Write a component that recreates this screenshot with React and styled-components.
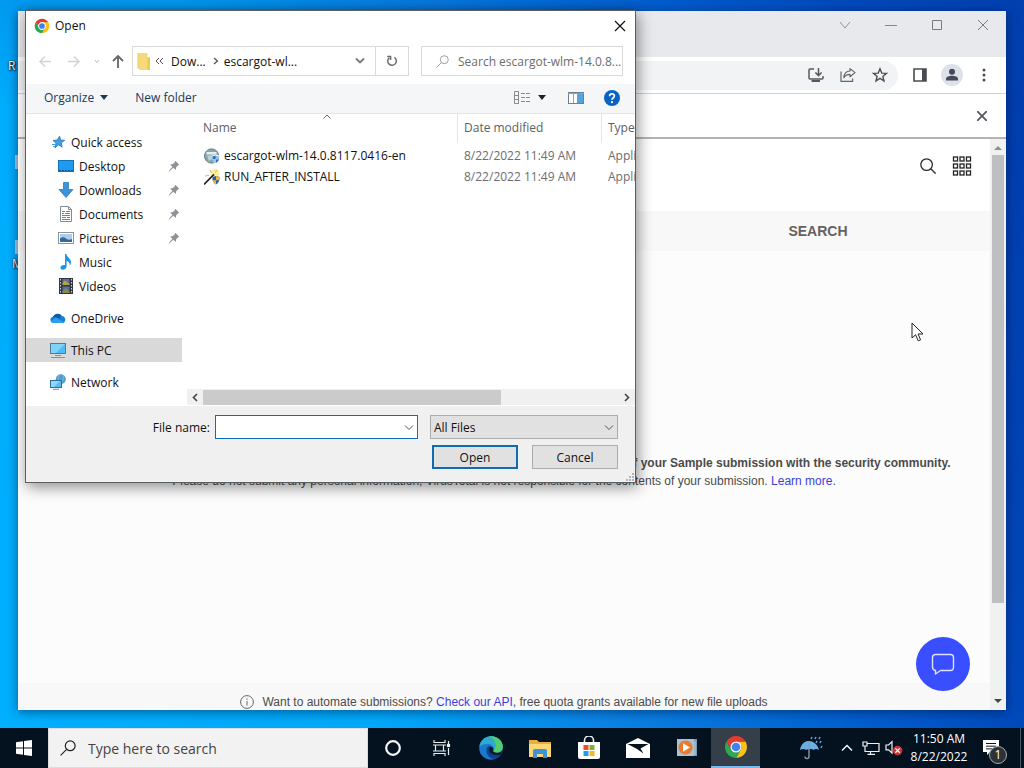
import React from 'react';
import styled, { createGlobalStyle, css } from 'styled-components';

const GlobalStyle = createGlobalStyle`
  * { box-sizing: border-box; }
  html, body { margin: 0; padding: 0; overflow: hidden; }
  body, button, input, select { font-family: 'Open Sans', 'Noto Sans', sans-serif; font-size: 12px; }
  button { background: none; border: 0; padding: 0; margin: 0; color: inherit; }
  svg { display: block; flex: none; }
`;

/* ---------- icons ---------- */

const ChromeIcon = ({ size }) => (
  <svg width={size} height={size} viewBox="0 0 48 48">
    <path fill="#fbc116" d="M24 13H43.05A22 22 0 0 1 24 46L33.53 29.5A11 11 0 0 0 24 13Z" />
    <path fill="#2da94f" d="M33.53 29.5L24 46A22 22 0 0 1 4.95 13L14.47 29.5A11 11 0 0 0 33.53 29.5Z" />
    <path fill="#e33b2e" d="M14.47 29.5L4.95 13A22 22 0 0 1 43.05 13H24A11 11 0 0 0 14.47 29.5Z" />
    <circle cx="24" cy="24" r="11" fill="#fff" />
    <circle cx="24" cy="24" r="8.6" fill="#3f82ee" />
  </svg>
);

const Line = ({ w = 16, h = 16, d, stroke = '#555', sw = 1, fill = 'none' }) => (
  <svg width={w} height={h} viewBox={`0 0 ${w} ${h}`} fill={fill} stroke={stroke} strokeWidth={sw}>
    <path d={d} />
  </svg>
);

const Magnifier = ({ size = 14, stroke = '#8a8a8a', sw = 1 }) => (
  <svg width={size} height={size} viewBox="0 0 16 16" fill="none" stroke={stroke} strokeWidth={sw}>
    <circle cx="10.2" cy="5.8" r="4.9" />
    <path d="M6.6 9.4L0.6 15.4" />
  </svg>
);

const StarIcon = () => (
  <svg width="16" height="16" viewBox="0 0 16 16">
    <path d="M9.6 2.2L10.6 6L14.6 6.4L11.2 8.8L12.2 13.2L8.6 10.8L5 13.8L6 9.2L3 6.4L7.2 6Z" fill="#3f9ee4" stroke="#1f74ba" strokeWidth=".8" />
    <path d="M2 10.5H5M3 12.5H5" stroke="#3f9ee4" />
  </svg>
);

const DesktopIcon = () => (
  <svg width="16" height="16" viewBox="0 0 16 16">
    <rect x=".5" y="2.5" width="15" height="11" fill="#1c9bf0" stroke="#1471b8" />
    <path d="M1 12.5H15" stroke="#0d5a98" strokeDasharray="2 1" />
  </svg>
);

const DownloadsIcon = () => (
  <svg width="16" height="16" viewBox="0 0 16 16">
    <path d="M5.5 .5H10.5V7.5H15L8 15.5L1 7.5H5.5Z" fill="#3b94da" stroke="#2a7ec0" strokeWidth=".8" />
  </svg>
);

const DocumentsIcon = () => (
  <svg width="16" height="16" viewBox="0 0 16 16">
    <path d="M2.5 .5H10.5L13.5 3.5V15.5H2.5Z" fill="#fff" stroke="#7d8b96" />
    <path d="M10.5 .5V3.5H13.5" fill="none" stroke="#7d8b96" />
    <path d="M4 5.5H7M8 5.5H12M4 7.5H6M7 7.5H12M4 9.5H12M4 11.5H8M9 11.5H12M4 13.5H12" stroke="#2f9bb8" />
  </svg>
);

const PicturesIcon = () => (
  <svg width="16" height="16" viewBox="0 0 16 16">
    <rect x=".5" y="2.5" width="15" height="11" fill="#fff" stroke="#8c959c" />
    <rect x="2" y="4" width="12" height="8" fill="#a8cdf0" />
    <path d="M2 8.5C5 6.5 6 7 8 8.5S12 10 14 9V12H2Z" fill="#3a6590" />
    <path d="M2 10.5L14 11V12H2Z" fill="#2b6fb8" />
  </svg>
);

const MusicIcon = () => (
  <svg width="16" height="16" viewBox="0 0 16 16">
    <path d="M7 0H8.4C8.6 3 13 4.4 13 8C13 9.4 12.4 10.8 11.6 11.6C12 9 10.6 7.4 8.6 6.8V12.6C8.6 14.4 6.8 15.8 4.8 15.8S2.2 14.4 2.6 13C3 11.4 5 10.6 7 11Z" fill="#1e96e8" />
  </svg>
);

const VideosIcon = () => (
  <svg width="16" height="16" viewBox="0 0 16 16">
    <rect x="1" y="0" width="14" height="16" fill="#33373d" />
    <path d="M2.5 1V16M13.5 1V16" stroke="#cfd3d8" strokeDasharray="1.5 1.5" />
    <rect x="4.5" y="1" width="7" height="6" fill="#5d6db0" />
    <path d="M4.5 5L7 2.5L11.5 6V7H4.5Z" fill="#b9a433" />
    <rect x="4.5" y="8.5" width="7" height="6.5" fill="#4b6ea8" />
    <path d="M4.5 13L8 10L11.5 14V15H4.5Z" fill="#8f8840" />
  </svg>
);

const OneDriveIcon = () => (
  <svg width="16" height="16" viewBox="0 0 16 16">
    <path d="M3 6.5A5 4.5 0 0 1 12 6L9 11L1 9.5A3.4 3.4 0 0 1 3 6.5Z" fill="#0a5aa8" />
    <path d="M12 6A3.6 3.6 0 0 1 12.8 13H3.6A3.5 3.5 0 0 1 .4 9C1.6 6.6 4.4 6.2 6.4 7.6L9.4 9C9.6 7.2 10.6 6.2 12 6Z" fill="#1581d6" />
    <path d="M6 7.6L14.6 12.4A3 3 0 0 1 12.8 13H3.6A3.4 3.4 0 0 1 1 11.4Z" fill="#2aa0ec" />
  </svg>
);

const PcIcon = () => (
  <svg width="16" height="16" viewBox="0 0 16 16">
    <rect x=".5" y="1.5" width="15" height="10" fill="#4cbcf2" stroke="#4f7c99" />
    <path d="M1 2H15L6 11H1Z" fill="#7fd3f8" />
    <path d="M5 13.5H11M1 15.5H15" stroke="#7897aa" />
  </svg>
);

const NetworkIcon = () => (
  <svg width="16" height="16" viewBox="0 0 16 16">
    <circle cx="10.8" cy="5.2" r="5" fill="#4f9dcf" />
    <path d="M10 .4C7.6 3 8 6 9 8M13 1C14 4 13 7 11 9.6" fill="none" stroke="#8fc4e2" strokeWidth=".8" />
    <rect x=".5" y="6.5" width="11" height="7" fill="#55bdf0" stroke="#2e6f9c" />
    <path d="M1 7H10L4 13H1Z" fill="#8fd7f8" />
    <path d="M3 15.3H9" stroke="#6f93aa" />
  </svg>
);

const PinIcon = () => (
  <svg width="12" height="12" viewBox="0 0 12 12">
    <path d="M7.2 .8L11.4 4.8L10 5.2L8.2 7.2L7.8 10L5.4 7.8L1 11.4L.8 11L4.4 6.8L2.2 4.4L5 4L6.8 2.2Z" fill="#8c9299" />
  </svg>
);

const SetupIcon = () => (
  <svg width="16" height="16" viewBox="0 0 16 16">
    <circle cx="7.6" cy="8" r="7.2" fill="#87a5a8" stroke="#5d7c80" strokeWidth=".8" />
    <path d="M2.5 4H12.5V6.5H2.5Z" fill="#e4eef0" />
    <path d="M3 7.5H8V11L5 13Z" fill="#b9d3da" />
    <path d="M8 7.6L11.8 6.6L15.6 7.6C15.8 11.6 14.4 14 11.8 15.6C9.2 14 7.8 11.6 8 7.6Z" fill="#fff" />
    <path d="M11.8 7.4V11.2H8.6C8.4 10 8.4 9 8.6 8.2ZM11.8 11.2H15C14.4 13 13.4 14.2 11.8 15Z" fill="#2b6fb8" />
    <path d="M11.8 7.4L15 8.2V11.2H11.8ZM11.8 11.2V15C10.2 14.2 9 13 8.6 11.2Z" fill="#8fc1e6" />
  </svg>
);

const WandIcon = () => (
  <svg width="16" height="16" viewBox="0 0 16 16">
    <circle cx="11" cy="4.4" r="4.4" fill="#fbf0a0" />
    <path d="M0 15.4L10 5.4" stroke="#222" strokeWidth="1.6" />
    <path d="M1 7L5 6.4M6 1L7.4 4M13 1L11.4 3.6" stroke="#e5b93a" />
    <path d="M8.4 8L12 7L15.6 8C15.8 11.6 14.6 14 12 15.6C9.4 14 8.2 11.6 8.4 8Z" fill="#2464ae" />
    <path d="M12 7L15.6 8V11.2H12ZM12 11.2V15.6C10.2 14.4 9 13 8.6 11.2Z" fill="#f0b53a" />
  </svg>
);

const FolderIcon = () => (
  <svg width="14" height="17" viewBox="0 0 14 17">
    <path d="M1 0H10.5V4.5H13V17H3L1 15.5Z" fill="#f6d978" />
    <path d="M10.5 4.5H13V17H10.5Z" fill="#ecc656" />
    <path d="M1 0V15.5" stroke="#ecc95f" />
  </svg>
);

const ViewIcon = () => (
  <svg width="17" height="13" viewBox="0 0 17 13" fill="none" stroke="#8a8a8a">
    <path d="M.5 .5H4.5V12.5H.5ZM.5 4.5H4.5M.5 8.5H4.5" />
    <path d="M7 2.5H11M12 2.5H16M7 6.5H11M12 6.5H16M7 10.5H11M12 10.5H16" />
  </svg>
);

const PaneIcon = () => (
  <svg width="16" height="12" viewBox="0 0 16 12">
    <rect x=".5" y=".5" width="15" height="11" fill="#fff" stroke="#6d7f8e" />
    <rect x="9" y="1" width="6" height="10" fill="#55a5dd" />
    <path d="M0 1.5H16M5.5 2V11" stroke="#8ea2b0" />
  </svg>
);

const HelpIcon = () => (
  <svg width="16" height="16" viewBox="0 0 16 16">
    <circle cx="8" cy="8" r="8" fill="#0a63c2" />
    <path d="M5.6 6.2C5.6 3.2 10.4 3.2 10.4 6C10.4 7.8 8 7.8 8 9.8" fill="none" stroke="#fff" strokeWidth="1.7" />
    <circle cx="8" cy="12.2" r="1.1" fill="#fff" />
  </svg>
);

const RefreshIcon = () => (
  <svg width="12" height="12" viewBox="0 0 12 12" fill="none" stroke="#6b6b6b" strokeWidth="1.5">
    <path d="M8.4 2.4A4.3 4.3 0 1 1 3.2 2.8" />
    <path d="M1.2 1.6H4.6V5" />
  </svg>
);

const InstallIcon = () => (
  <svg width="16" height="16" viewBox="0 0 16 16" fill="none" stroke="#55595e" strokeWidth="1.5">
    <path d="M6 2H2Q1 2 1 3V11Q1 12 2 12H14Q15 12 15 11V9" />
    <path d="M10.5 1V8.4M7.4 5.4L10.5 8.6L13.6 5.4" />
    <path d="M3.5 14H12" strokeWidth="2" />
  </svg>
);

const ShareIcon = () => (
  <svg width="16" height="16" viewBox="0 0 16 16" fill="none" stroke="#62666b" strokeWidth="1.2">
    <path d="M1 4.4V14.4H12.6V11.6" />
    <path d="M10 1.6L15 5.6L10 9.8V7.4C7 7.4 5 8.4 3.8 10.8C4 7 6.4 4.2 10 4Z" strokeLinejoin="round" />
  </svg>
);

const FavStarIcon = () => (
  <svg width="16" height="16" viewBox="0 0 16 16" fill="none" stroke="#4c5055" strokeWidth="1.4">
    <path d="M8 1.8L9.8 6.1L14.4 6.4L10.9 9.4L12 13.9L8 11.4L4 13.9L5.1 9.4L1.6 6.4L6.2 6.1Z" />
  </svg>
);

const SidePanelIcon = () => (
  <svg width="16" height="16" viewBox="0 0 16 16">
    <path d="M2 2H14V14H2Z" fill="none" stroke="#484c51" strokeWidth="1.6" />
    <path d="M10 2H14V14H10Z" fill="#484c51" />
  </svg>
);

const ProfileIcon = () => (
  <svg width="22" height="22" viewBox="0 0 22 22">
    <circle cx="11" cy="11" r="11" fill="#dde1ea" />
    <circle cx="11" cy="7.8" r="3" fill="#474d58" />
    <path d="M5 16.4V15C5 12.6 8 11.8 11 11.8S17 12.6 17 15V16.4Z" fill="#474d58" />
  </svg>
);

const DotsIcon = () => (
  <svg width="16" height="16" viewBox="0 0 16 16" fill="#484c51">
    <circle cx="8" cy="3" r="1.5" />
    <circle cx="8" cy="8" r="1.5" />
    <circle cx="8" cy="13" r="1.5" />
  </svg>
);

const PageSearchIcon = () => (
  <svg width="16" height="16" viewBox="0 0 16 16" fill="none" stroke="#2b2b2b" strokeWidth="1.3">
    <circle cx="6.6" cy="6.6" r="5.8" />
    <path d="M10.8 10.8L15.6 15.6" />
  </svg>
);

const AppsIcon = () => (
  <svg width="20" height="20" viewBox="0 0 20 20" fill="none" stroke="#222" strokeWidth="1.3">
    {[1.5, 8.5, 15.5].map((y) =>
      [1.5, 8, 14.5].map((x) => <rect key={`${x}-${y}`} x={x} y={y - 0.5} width="4" height="4" />)
    )}
  </svg>
);

const InfoIcon = () => (
  <svg width="14" height="14" viewBox="0 0 14 14" fill="none" stroke="#666">
    <circle cx="7" cy="7" r="6.4" />
    <path d="M7 3.4V4.8M7 6V10.6" />
  </svg>
);

const ChatIcon = () => (
  <svg width="24" height="24" viewBox="0 0 24 24" fill="none" stroke="#dfe2ff" strokeWidth="1.4">
    <path d="M4.5 2.5H19.5Q22.5 2.5 22.5 5.5V15Q22.5 18.5 19.5 18.5H9.5L4.5 22V18.5Q1.5 18 1.5 15V5.5Q1.5 2.5 4.5 2.5Z" strokeLinejoin="round" />
  </svg>
);

const WindowsIcon = () => (
  <svg width="16" height="16" viewBox="0 0 16 16" fill="#fff">
    <path d="M0 2.2L7 1.2V7.5H0ZM8 1.1L16 0V7.5H8ZM0 8.5H7V14.8L0 13.8ZM8 8.5H16V16L8 14.9Z" />
  </svg>
);

const CortanaIcon = () => (
  <svg width="16" height="16" viewBox="0 0 16 16" fill="none" stroke="#f4f6f8" strokeWidth="2.2">
    <circle cx="8" cy="8" r="6.8" />
  </svg>
);

const TaskViewIcon = () => (
  <svg width="18" height="16" viewBox="0 0 18 16" fill="none" stroke="#e8ecef" strokeWidth="1.2">
    <path d="M1 0V2.5H12V0M1 16V13.5H12V16M2.5 5H10.5V11H2.5ZM0 5H13M0 11H13M15.5 1V4M15.5 8V15" />
    <rect x="14.5" y="4.5" width="2" height="2" fill="#fff" />
  </svg>
);

const EdgeIcon = () => (
  <svg width="24" height="24" viewBox="0 0 24 24">
    <circle cx="12" cy="12" r="11.8" fill="#1b78cf" />
    <path d="M.4 10.6C1.4 4 6.4 .2 12 .2C19 .2 23.8 5.6 23.8 10.6C23.8 14.4 21 16.8 17.8 16.8C15.4 16.8 13.8 15.8 14.2 14.6C15.6 12 14 8.6 9.8 8C6 7.6 2 9 .4 10.6Z" fill="#2fa9d0" />
    <path d="M10 .4C19 -.6 23.8 5.6 23.8 10.6C23.8 14.4 21 16.8 17.8 16.8C15.4 16.8 13.8 15.8 14.2 14.6C19 11 17 3 10 .4Z" fill="#52cf6c" />
    <path d="M9.2 10C6 13 7 20 13 22.6C16.4 23.4 20.4 21.6 22 18.4C18 20.4 12 19.4 10.4 15.6C9.6 13.6 10 11.6 11.4 10.4Z" fill="#123f8c" />
    <path d="M11.4 10.4C13.8 10.6 15 12.8 14.2 14.6C13.8 15.8 15.4 16.8 17.8 16.8C20 16.8 22 15.8 23 14.4L22 18.4C18 20.4 12 19.4 10.4 15.6C9.6 13.6 10 11.6 11.4 10.4Z" fill="#0a1b2e" />
  </svg>
);

const ExplorerIcon = () => (
  <svg width="22" height="19" viewBox="0 0 22 19">
    <path d="M0 1H8L10 3H22V18H0Z" fill="#e9ae3d" />
    <path d="M0 5H22V18H0Z" fill="#fbd775" />
    <path d="M4 19V12Q4 10 6 10H16Q18 10 18 12V19H14V15H8V19Z" fill="#3e93d6" />
  </svg>
);

const StoreIcon = () => (
  <svg width="24" height="24" viewBox="0 0 24 24">
    <path d="M7.5 7V4.5A4.5 4.5 0 0 1 16.5 4.5V7" fill="none" stroke="#e9edef" strokeWidth="1.6" />
    <path d="M1 6H23V21Q23 23 21 23H3Q1 23 1 21Z" fill="#fff" />
    <rect x="6.5" y="9" width="5" height="5" fill="#e8502f" />
    <rect x="12.5" y="9" width="5" height="5" fill="#7db32e" />
    <rect x="6.5" y="15" width="5" height="5" fill="#1e9fe3" />
    <rect x="12.5" y="15" width="5" height="5" fill="#f5b62a" />
  </svg>
);

const MailIcon = () => (
  <svg width="24" height="20" viewBox="0 0 24 20">
    <path d="M12 0L24 6V20H0V6Z" fill="#fff" />
    <path d="M1.5 6H22.5L14.5 10.5L17.5 15.5L11 11Z" fill="#06131f" />
  </svg>
);

const MediaIcon = () => (
  <svg width="20" height="20" viewBox="0 0 20 20">
    <rect x="4" y="1" width="16" height="17" fill="#7699b4" />
    <rect x="0" y="1" width="17" height="17" fill="#a9c3d5" />
    <path d="M18 3V17" stroke="#b9d2e2" />
    <circle cx="8.5" cy="9.5" r="7" fill="#ec7a2c" />
    <path d="M6 5.2L13 9.5L6 13.8Z" fill="#fff" />
  </svg>
);

const UmbrellaIcon = () => (
  <svg width="24" height="24" viewBox="0 0 24 24">
    <path d="M1 14C2 7 7 4.8 10 5C15 5.4 19 9 20 14C18 12.6 16 12.6 14.6 14C13 12.6 9 12.6 7.4 14C5.4 12.6 3 12.6 1 14Z" fill="#68aee6" />
    <path d="M10 6V20.6Q10 22.6 8 22.6T6 20.6" fill="none" stroke="#8d99a4" strokeWidth="1.4" />
    <path d="M13 1L12 3M17 1L16 3M21 1L20 3M18 5L17 7M22 5L21 7M23 10L22 12" stroke="#5aa7e6" strokeWidth="1.5" />
  </svg>
);

const NetTrayIcon = () => (
  <svg width="18" height="14" viewBox="0 0 18 14" fill="none" stroke="#eef1f3" strokeWidth="1.2">
    <path d="M5 2.5H17V10.5H3V7M8.5 10.5V13M5.5 13.3H13M1 1H5V5H1ZM3 5V8" />
  </svg>
);

const SoundIcon = () => (
  <svg width="18" height="16" viewBox="0 0 18 16">
    <path d="M1 5H3.6L7 1.6V13L3.6 9.8H1Z" fill="none" stroke="#eef1f3" strokeWidth="1.2" />
    <circle cx="12.6" cy="10.6" r="4.8" fill="#c9302f" />
    <path d="M10.4 8.4L14.8 12.8M14.8 8.4L10.4 12.8" stroke="#fff" strokeWidth="1.3" />
  </svg>
);

const ActionCenterIcon = () => (
  <svg width="16" height="16" viewBox="0 0 16 16">
    <path d="M0 0H16V12H7L4 15V12H0Z" fill="#fff" />
    <path d="M3 3.5H13M3 6.2H13M3 8.9H10" stroke="#0a1520" />
  </svg>
);

/* ---------- desktop ---------- */

const Desktop = styled.div`
  position: relative;
  height: 100vh;
  overflow: hidden;
  display: flex;
  flex-direction: column;
  background:
    linear-gradient(to bottom, rgba(0, 80, 190, 0.2), transparent 14%),
    linear-gradient(75deg, #00b0ff 0%, #00a8fa 32%, #0a84e6 50%, #0060d0 70%, #0046b8 86%, #003cac 100%);
`;

const Wallpaper = styled.div`
  flex: 1;
  padding: 56px 0 0 8px;
  color: #fff;
  line-height: 20px;
  text-shadow: 1px 1px 2px #000, 0 0 2px #000;
`;

const Shortcut = styled.div`
  height: 99px;
  padding-left: ${(p) => p.$indent || 0}px;
`;

const ShortcutTile = styled.div`
  width: 16px;
  height: 14px;
  margin-top: ${(p) => p.$top || 0}px;
  background: #b5d3ec;
`;

const Window = styled.section`
  position: absolute;
  display: flex;
  flex-direction: column;
`;

/* ---------- browser ---------- */

const Browser = styled(Window)`
  inset: 11px 18px 58px;
  background: #fcfcfc;
  box-shadow: 0 2px 10px rgba(0, 10, 50, 0.5);
  font-family: 'Liberation Sans', Arial, sans-serif;
`;

const BrowserTitle = styled.div`
  height: 46px;
  background: #e7e9ec;
  display: flex;
  justify-content: flex-end;
`;

const CaptionButton = styled.button`
  width: 46px;
  height: 28px;
  display: flex;
  align-items: center;
  justify-content: center;
`;

const Toolbar = styled.div`
  height: 37px;
  background: #fff;
  border-bottom: 1px solid #d0d2d4;
  display: flex;
  align-items: center;
  gap: 14px;
  padding-right: 14px;
`;

const Omnibox = styled.div`
  flex: 1;
  height: 29px;
  border-radius: 0 15px 15px 0;
  background: #f1f3f4;
  display: flex;
  align-items: center;
  justify-content: flex-end;
  gap: 16px;
  padding-right: 10px;
`;

const ToolButtons = styled.div`
  display: flex;
  align-items: center;
  gap: 13px;
`;

const Notice = styled.div`
  height: 45px;
  background: #fff;
  border-bottom: 2px solid #b4b4b4;
  display: flex;
  align-items: center;
  justify-content: flex-end;
  padding-right: 19px;
`;

const Viewport = styled.div`
  flex: 1;
  min-height: 0;
  display: flex;
`;

const Page = styled.main`
  flex: 1;
  display: flex;
  flex-direction: column;
  color: #4b4b4b;
`;

const PageHeader = styled.header`
  height: 72px;
  background: #fff;
  display: flex;
  justify-content: flex-end;
  gap: 16px;
  padding: 17px 18px 0 0;

  button { height: 20px; display: flex; align-items: center; }
`;

const Tabs = styled.nav`
  height: 40px;
  background: #f8f8f8;
  display: flex;
  justify-content: center;
`;

const Tab = styled.button`
  width: 314px;
  font-family: inherit;
  font-size: 14px;
  font-weight: bold;
  color: #636363;
`;

const Terms = styled.div`
  flex: 1;
  padding-top: 203px;
  text-align: center;
  font-size: 12px;
  line-height: 18px;
  white-space: nowrap;

  p { margin: 0; }
  a { color: #3b3fd8; text-decoration: none; }
`;

const PageFooter = styled.footer`
  height: 27px;
  background: #f8f8f8;
  display: flex;
  align-items: center;
  justify-content: center;
  gap: 8px;
  padding-top: 10px;
  font-size: 12px;

  a { color: #3b3fd8; text-decoration: none; }
`;

const PageScroll = styled.div`
  width: 16px;
  background: #f0f1f1;
  display: flex;
  flex-direction: column;
  align-items: center;
  padding: 7px 0;
`;

const PageThumb = styled.div`
  flex: 449;
  width: 12px;
  margin-top: 5px;
  background: #bdbfc1;
`;

const PageTrack = styled.div`
  flex: 96;
`;

const ChatButton = styled.button`
  position: absolute;
  right: 36px;
  bottom: 19px;
  width: 54px;
  height: 54px;
  border-radius: 50%;
  background: #394eff;
  display: flex;
  align-items: center;
  justify-content: center;
`;

/* ---------- open dialog ---------- */

const Dialog = styled(Window)`
  left: 25px;
  top: 10px;
  width: 611px;
  background: #fff;
  border: 1px solid #5c5f62;
  box-shadow: 2px 4px 14px rgba(0, 0, 0, 0.45);
  color: #111;
`;

const DialogTitle = styled.div`
  height: 35px;
  display: flex;
  align-items: center;
  gap: 5px;
  padding: 0 9px 6px 8px;

  h1 { margin: 0; flex: 1; font-size: 12px; font-weight: normal; }
`;

const NavRow = styled.div`
  height: 30px;
  display: flex;
  align-items: center;
  padding: 0 12px;
`;

const NavArrows = styled.div`
  flex: none;
  width: 94px;
  display: flex;
  align-items: center;
  gap: 12px;
`;

const field = css`
  height: 30px;
  border: 1px solid #d9d9d9;
  background: #fff;
`;

const AddressBar = styled.div`
  ${field}
  flex: none;
  width: 277px;
  display: flex;
  align-items: center;
  padding-left: 4px;
`;

const Crumb = styled.button`
  margin: 0 6px 0 4px;
`;

const Spacer = styled.div`
  flex: 1;
`;

const RefreshButton = styled.button`
  width: 33px;
  height: 28px;
  margin-left: 9px;
  border-left: 1px solid #d9d9d9;
  display: flex;
  align-items: center;
  justify-content: center;
`;

const SearchBox = styled.label`
  ${field}
  flex: 1;
  min-width: 0;
  margin-left: 12px;
  display: flex;
  align-items: center;
  gap: 9px;
  padding-left: 14px;

  input {
    flex: 1;
    min-width: 0;
    border: 0;
    padding: 0;
    outline: 0;
    background: none;
  }
  input::placeholder { color: #6d6d6d; opacity: 1; }
`;

const CommandBar = styled.div`
  height: 30px;
  margin-top: 8px;
  background: #f4f6f8;
  border-bottom: 1px solid #e4e7ea;
  color: #1e395b;
  display: flex;
  align-items: center;
  padding: 0 15px 2px 18px;
`;

const CommandButton = styled.button`
  display: flex;
  align-items: center;
  gap: 6px;
  margin-right: ${(p) => p.$after || 0}px;
`;

const Panes = styled.div`
  display: flex;
  height: 292px;
`;

const Sidebar = styled.nav`
  width: 161px;
  padding: 16px 5px 0 0;
`;

const Place = styled.button`
  width: 100%;
  height: 24px;
  display: flex;
  align-items: center;
  gap: 5px;
  padding: 0 2px 0 ${(p) => (p.$child ? 32 : 24)}px;
  margin-top: ${(p) => (p.$group ? 8 : 0)}px;
  background: ${(p) => (p.$selected ? '#d9d9d9' : 'transparent')};
  text-align: left;

  span { flex: 1; }
`;

const FilePane = styled.div`
  flex: 1;
  min-width: 0;
  display: flex;
  flex-direction: column;
  overflow: hidden;
`;

const SortMark = styled.div`
  position: absolute;
  left: 297px;
  top: 103px;
`;

const Files = styled.table`
  width: 520px;
  table-layout: fixed;
  border-collapse: separate;
  border-spacing: 0;
  white-space: nowrap;

  th {
    height: 31px;
    padding: 0 6px;
    border-right: 1px solid #e3e6e8;
    border-bottom: 5px solid #fff;
    color: #5b6066;
    font-weight: normal;
    text-align: left;
  }
  th:first-child { padding-left: 16px; }
  td { height: 21px; padding: 0 6px; color: #6d6d6d; }
`;

const FileName = styled.div`
  display: flex;
  align-items: center;
  gap: 4px;
  padding-left: 11px;
  color: #111;
`;

const HScroll = styled.div`
  height: 16px;
  margin-bottom: 1px;
  background: #f0f0f0;
  display: flex;
  align-items: center;
  justify-content: space-between;
`;

const HThumb = styled.div`
  width: 298px;
  height: 15px;
  margin-right: auto;
  background: #cbcbcb;
`;

const HArrow = styled.button`
  width: 16px;
  display: flex;
  justify-content: center;
`;

const DialogFooter = styled.form`
  height: 76px;
  background: #f0f0f0;
  padding: 9px 17px 0 0;
  display: flex;
  flex-direction: column;
  gap: 6px;
`;

const FooterRow = styled.div`
  display: flex;
  justify-content: flex-end;
  align-items: center;
`;

const Combo = styled.div`
  display: grid;
  width: ${(p) => p.$width}px;
  height: 24px;
  margin-left: ${(p) => p.$before}px;
  border: 1px solid ${(p) => (p.$focus ? '#0f6cbd' : '#adadad')};
  background: ${(p) => (p.$focus ? '#fff' : '#e1e1e1')};

  > * { grid-area: 1 / 1; }
  > svg { place-self: center end; margin-right: 3px; pointer-events: none; }
  input, select {
    width: 100%;
    border: 0;
    outline: 0;
    padding: 0 20px 0 3px;
    background: none;
    appearance: none;
    color: #111;
  }
`;

const DialogButton = styled.button`
  width: 86px;
  height: 24px;
  margin-left: 14px;
  background: #e1e1e1;
  border: ${(p) => (p.$primary ? '2px solid #0f6cad' : '1px solid #adadad')};
`;

const Grip = styled.div`
  position: absolute;
  right: 1px;
  bottom: 1px;
`;

const Pointer = styled.div`
  position: absolute;
  left: 911px;
  top: 322px;
`;

/* ---------- taskbar ---------- */

const Taskbar = styled.footer`
  height: 40px;
  background: #04121f;
  color: #fff;
  display: flex;
  align-items: stretch;
`;

const TaskButton = styled.button`
  width: ${(p) => p.$width || 49}px;
  display: flex;
  align-items: center;
  justify-content: center;
  background: ${(p) => (p.$active ? '#343f4a' : 'none')};
  border-bottom: ${(p) => (p.$active ? '2px solid #76b9ed' : '0')};
`;

const TaskSearch = styled.label`
  width: 320px;
  background: #f2f2f2;
  border: 1px solid #dcdcdc;
  display: flex;
  align-items: center;
  gap: 12px;
  padding-left: 11px;

  input {
    flex: 1;
    border: 0;
    outline: 0;
    padding: 0;
    background: none;
    font-size: 14px;
  }
  input::placeholder { color: #444; opacity: 1; }
`;

const Tray = styled.div`
  margin-left: auto;
  display: flex;
  align-items: stretch;
  padding-right: 3px;
`;

const Clock = styled.div`
  width: 68px;
  padding-top: 2px;
  text-align: center;
  font-size: 12px;
  line-height: 18px;
  white-space: nowrap;
`;

const Notifications = styled(TaskButton)`
  position: relative;
  padding-right: 12px;
  border-right: 1px solid #4c5661;
`;

const Badge = styled.span`
  position: absolute;
  right: 13px;
  bottom: 4px;
  width: 18px;
  height: 18px;
  border: 1px solid #a5a9ad;
  border-radius: 50%;
  background: #2c3238;
  font-size: 12px;
  line-height: 16px;
`;

const places = [
  { name: 'Quick access', icon: StarIcon },
  { name: 'Desktop', icon: DesktopIcon, child: true, pin: true },
  { name: 'Downloads', icon: DownloadsIcon, child: true, pin: true },
  { name: 'Documents', icon: DocumentsIcon, child: true, pin: true },
  { name: 'Pictures', icon: PicturesIcon, child: true, pin: true },
  { name: 'Music', icon: MusicIcon, child: true },
  { name: 'Videos', icon: VideosIcon, child: true },
  { name: 'OneDrive', icon: OneDriveIcon, group: true },
  { name: 'This PC', icon: PcIcon, group: true, selected: true },
  { name: 'Network', icon: NetworkIcon, group: true },
];

const files = [
  { name: 'escargot-wlm-14.0.8117.0416-en', icon: SetupIcon, date: '8/22/2022 11:49 AM', type: 'Application' },
  { name: 'RUN_AFTER_INSTALL', icon: WandIcon, date: '8/22/2022 11:49 AM', type: 'Application' },
];

function BrowserWindow() {
  return (
    <Browser>
      <BrowserTitle>
        <CaptionButton aria-label="Search tabs"><Line w={12} h={10} d="M1 2L6 8L11 2" stroke="#8d929b" /></CaptionButton>
        <CaptionButton aria-label="Minimize"><Line w={12} h={12} d="M0 6.5H12" stroke="#85898d" /></CaptionButton>
        <CaptionButton aria-label="Maximize"><Line w={12} h={12} d="M1.5 1.5H10.5V10.5H1.5Z" stroke="#777b80" /></CaptionButton>
        <CaptionButton aria-label="Close"><Line w={12} h={12} d="M1 1L11 11M11 1L1 11" stroke="#777b80" /></CaptionButton>
      </BrowserTitle>
      <Toolbar>
        <Omnibox>
          <button aria-label="Install"><InstallIcon /></button>
          <button aria-label="Share"><ShareIcon /></button>
          <button aria-label="Bookmark"><FavStarIcon /></button>
        </Omnibox>
        <ToolButtons>
          <button aria-label="Side panel"><SidePanelIcon /></button>
          <button aria-label="Profile"><ProfileIcon /></button>
          <button aria-label="Menu"><DotsIcon /></button>
        </ToolButtons>
      </Toolbar>
      <Notice>
        <button aria-label="Dismiss"><Line w={10} h={10} d="M0 0L10 10M10 0L0 10" stroke="#55595e" sw={1.8} /></button>
      </Notice>
      <Viewport>
        <Page>
          <PageHeader>
            <button aria-label="Search"><PageSearchIcon /></button>
            <button aria-label="Apps"><AppsIcon /></button>
          </PageHeader>
          <Tabs>
            <Tab>FILE</Tab>
            <Tab>URL</Tab>
            <Tab>SEARCH</Tab>
          </Tabs>
          <Terms>
            <p>
              By submitting data above, you are agreeing to our <a href="#terms">Terms of Service</a> and{' '}
              <a href="#privacy">Privacy Policy</a>, and to the <b>sharing of your Sample submission with the security community.</b>
            </p>
            <p>
              Please do not submit any personal information; VirusTotal is not responsible for the contents of your submission.{' '}
              <a href="#more">Learn more.</a>
            </p>
          </Terms>
          <PageFooter>
            <InfoIcon />
            <span>
              Want to automate submissions? <a href="#api">Check our API,</a> free quota grants available for new file uploads
            </span>
          </PageFooter>
        </Page>
        <PageScroll>
          <Line w={8} h={4} d="M0 4L4 0L8 4Z" stroke="none" fill="#8b8f92" />
          <PageThumb />
          <PageTrack />
          <Line w={8} h={4} d="M0 0L4 4L8 0Z" stroke="none" fill="#444" />
        </PageScroll>
      </Viewport>
      <ChatButton aria-label="Chat"><ChatIcon /></ChatButton>
    </Browser>
  );
}

function OpenDialog() {
  return (
    <Dialog>
      <DialogTitle>
        <ChromeIcon size={16} />
        <h1>Open</h1>
        <button aria-label="Close"><Line w={12} h={12} d="M1 1L11 11M11 1L1 11" stroke="#111" sw={1.2} /></button>
      </DialogTitle>
      <NavRow>
        <NavArrows>
          <button aria-label="Back"><Line d="M2 8.5H13M7 3.5L2 8.5L7 13.5" stroke="#d2d2d2" sw={1.4} /></button>
          <button aria-label="Forward"><Line d="M2 8.5H13M8 3.5L13 8.5L8 13.5" stroke="#d2d2d2" sw={1.4} /></button>
          <button aria-label="Recent"><Line w={6} h={5} d="M1 1L3 3.5L5 1" stroke="#bbb" /></button>
          <button aria-label="Up"><Line w={12} h={14} d="M6 14V2M1 7L6 2L11 7" stroke="#666" sw={1.8} /></button>
        </NavArrows>
        <AddressBar>
          <FolderIcon />
          <Line w={16} h={10} d="M8 2L5 5L8 8M12 2L9 5L12 8" stroke="#555" />
          <Crumb>Dow...</Crumb>
          <Line w={8} h={8} d="M2 1L5.5 4L2 7" stroke="#555" sw={1.3} />
          <Crumb>escargot-wl...</Crumb>
          <Spacer />
          <Line w={12} h={8} d="M2 1.5L6 5.5L10 1.5" stroke="#777" sw={1.8} />
          <RefreshButton aria-label="Refresh"><RefreshIcon /></RefreshButton>
        </AddressBar>
        <SearchBox>
          <Magnifier size={13} />
          <input type="text" aria-label="Search folder" placeholder="Search escargot-wlm-14.0.8..." />
        </SearchBox>
      </NavRow>
      <CommandBar>
        <CommandButton $after={27}>
          Organize <Line w={8} h={5} d="M0 0H8L4 5Z" stroke="none" fill="#1e395b" />
        </CommandButton>
        <CommandButton>New folder</CommandButton>
        <Spacer />
        <CommandButton $after={21} aria-label="Change view">
          <ViewIcon />
          <Line w={10} h={5} d="M1 0H9L5 5Z" stroke="none" fill="#222" />
        </CommandButton>
        <CommandButton $after={20} aria-label="Preview pane"><PaneIcon /></CommandButton>
        <CommandButton aria-label="Help"><HelpIcon /></CommandButton>
      </CommandBar>
      <Panes>
        <Sidebar>
          {places.map(({ name, icon: Icon, child, pin, group, selected }) => (
            <Place key={name} $child={child} $group={group} $selected={selected}>
              <Icon />
              <span>{name}</span>
              {pin && <PinIcon />}
            </Place>
          ))}
        </Sidebar>
        <FilePane>
          <SortMark><Line w={8} h={5} d="M.5 4.5L4 1L7.5 4.5" stroke="#666" /></SortMark>
          <Files>
            <colgroup>
              <col width="271" />
              <col width="144" />
              <col width="105" />
            </colgroup>
            <thead>
              <tr>
                <th>Name</th>
                <th>Date modified</th>
                <th>Type</th>
              </tr>
            </thead>
            <tbody>
              {files.map(({ name, icon: Icon, date, type }) => (
                <tr key={name}>
                  <td><FileName><Icon />{name}</FileName></td>
                  <td>{date}</td>
                  <td>{type}</td>
                </tr>
              ))}
            </tbody>
          </Files>
          <Spacer />
          <HScroll>
            <HArrow aria-label="Scroll left"><Line w={6} h={9} d="M5 1L1.5 4.5L5 8" stroke="#444" sw={1.6} /></HArrow>
            <HThumb />
            <HArrow aria-label="Scroll right"><Line w={6} h={9} d="M1 1L4.5 4.5L1 8" stroke="#444" sw={1.6} /></HArrow>
          </HScroll>
        </FilePane>
      </Panes>
      <DialogFooter>
        <FooterRow>
          <label htmlFor="filename">File name:</label>
          <Combo $width={203} $before={5} $focus>
            <input id="filename" type="text" />
            <Line w={10} h={7} d="M1 1.5L5 5.5L9 1.5" stroke="#555" />
          </Combo>
          <Combo $width={188} $before={12}>
            <select aria-label="File type"><option>All Files</option></select>
            <Line w={10} h={7} d="M1 1.5L5 5.5L9 1.5" stroke="#555" />
          </Combo>
        </FooterRow>
        <FooterRow>
          <DialogButton type="button" $primary>Open</DialogButton>
          <DialogButton type="button">Cancel</DialogButton>
        </FooterRow>
      </DialogFooter>
      <Grip><Line w={8} h={8} d="M6 1H8M3 4H5M6 4H8M0 7H2M3 7H5M6 7H8" stroke="#b5b5b5" sw={2} /></Grip>
    </Dialog>
  );
}

function TaskbarStrip() {
  return (
    <Taskbar>
      <TaskButton $width={48} aria-label="Start"><WindowsIcon /></TaskButton>
      <TaskSearch>
        <Magnifier size={16} stroke="#222" sw={1.2} />
        <input type="text" aria-label="Search" placeholder="Type here to search" />
      </TaskSearch>
      <TaskButton aria-label="Cortana"><CortanaIcon /></TaskButton>
      <TaskButton aria-label="Task view"><TaskViewIcon /></TaskButton>
      <TaskButton aria-label="Edge"><EdgeIcon /></TaskButton>
      <TaskButton aria-label="Explorer"><ExplorerIcon /></TaskButton>
      <TaskButton aria-label="Store"><StoreIcon /></TaskButton>
      <TaskButton aria-label="Mail"><MailIcon /></TaskButton>
      <TaskButton aria-label="Media player"><MediaIcon /></TaskButton>
      <TaskButton $active aria-label="Chrome"><ChromeIcon size={24} /></TaskButton>
      <Tray>
        <TaskButton $width={48} aria-label="Weather"><UmbrellaIcon /></TaskButton>
        <TaskButton $width={24} aria-label="Hidden icons"><Line w={12} h={8} d="M1 6.5L6 1.5L11 6.5" stroke="#fff" sw={1.3} /></TaskButton>
        <TaskButton $width={24} aria-label="Network"><NetTrayIcon /></TaskButton>
        <TaskButton $width={22} aria-label="Volume"><SoundIcon /></TaskButton>
        <Clock>
          <div>11:50 AM</div>
          <div>8/22/2022</div>
        </Clock>
        <Notifications $width={48} aria-label="Notifications">
          <ActionCenterIcon />
          <Badge>1</Badge>
        </Notifications>
      </Tray>
    </Taskbar>
  );
}

function App() {
  return (
    <>
      <GlobalStyle />
      <Desktop>
        <Wallpaper>
          <Shortcut>R</Shortcut>
          <Shortcut $indent={7}>
            <ShortcutTile />
            <ShortcutTile $top={71} />
          </Shortcut>
          <Shortcut $indent={4}>M</Shortcut>
        </Wallpaper>
        <BrowserWindow />
        <OpenDialog />
        <Pointer>
          <svg width="13" height="20" viewBox="0 0 13 20">
            <path d="M1 1V16L4.6 12.8L7.2 18.8L9.6 17.8L7 12H12Z" fill="#fff" stroke="#222" />
          </svg>
        </Pointer>
        <TaskbarStrip />
      </Desktop>
    </>
  );
}

export default App;
